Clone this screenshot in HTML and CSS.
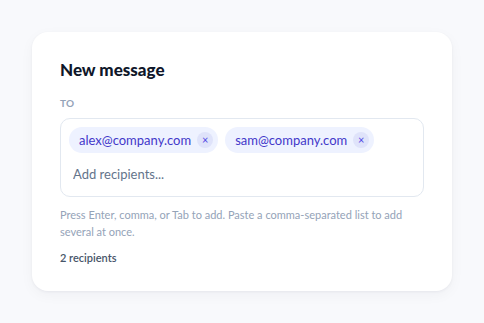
FILE: index.html
```html
<!DOCTYPE html>
<html lang="en">

<head>
    <meta charset="UTF-8">
    <meta name="viewport" content="width=device-width, initial-scale=1.0">
    <title>New message</title>
    <link rel="stylesheet" href="styles.css">
</head>

<body>
    <div class="compose-card">
        <h1 class="compose-title">New message</h1>
        <label class="field-label" for="recipientInput">To</label>

        <div class="recipient-box">
            <div class="chip-list">
                <span class="chip">alex@company.com <button class="chip-remove" type="button">×</button></span>
                <span class="chip">sam@company.com <button class="chip-remove" type="button">×</button></span>
            </div>
            <input type="text" id="recipientInput" class="recipient-input" placeholder="Add recipients...">
        </div>

        <p class="hint">Press Enter, comma, or Tab to add. Paste a comma-separated list to add several at once.</p>
        <p class="count">2 recipients</p>
    </div>
</body>

</html>
```

FILE: styles.css
```css
* {
    margin: 0;
    padding: 0;
    box-sizing: border-box;
}

body {
    font-family: Lato, 'Open Sans', sans-serif;
    background: #f8f9fc;
    padding: 32px;
}

.compose-card {
    width: 420px;
    height: 259px;
    background: white;
    border-radius: 16px;
    box-shadow: 0 1px 3px rgba(15, 23, 42, 0.05), 0 4px 14px rgba(15, 23, 42, 0.04);
    padding: 28px 28px 0 28px;
}

.compose-title {
    font-size: 17px;
    font-weight: 900;
    color: #0f172a;
    line-height: 20px;
    margin-bottom: 16px;
}

.field-label {
    display: block;
    font-size: 10px;
    font-weight: 700;
    text-transform: uppercase;
    color: #94a3b8;
    letter-spacing: 0.3px;
    line-height: 14px;
    margin-bottom: 8px;
}

.recipient-box {
    border: 1px solid #e2e8f0;
    border-radius: 10px;
    padding: 8px;
    height: 79px;
}

.chip-list {
    display: flex;
    gap: 7px;
    margin-bottom: 8px;
}

.chip {
    display: inline-flex;
    align-items: center;
    height: 26px;
    padding: 0 5px 0 10px;
    background: #eef2ff;
    color: #4338ca;
    font-size: 13px;
    border-radius: 13px;
    gap: 6px;
}

.chip-remove {
    width: 16px;
    height: 16px;
    border: none;
    border-radius: 50%;
    background: #dfe3fa;
    color: #4f46e5;
    font-size: 11px;
    line-height: 16px;
    font-family: inherit;
    cursor: pointer;
}

.recipient-input {
    width: 100%;
    border: none;
    outline: none;
    font-family: inherit;
    font-size: 13px;
    color: #334155;
    padding: 4px;
    line-height: 18px;
}

.recipient-input::placeholder {
    color: #64748b;
}

.hint {
    font-size: 11px;
    line-height: 17px;
    color: #94a3b8;
    margin-top: 9px;
}

.count {
    font-size: 11px;
    font-weight: 600;
    color: #475569;
    margin-top: 11px;
}
```
